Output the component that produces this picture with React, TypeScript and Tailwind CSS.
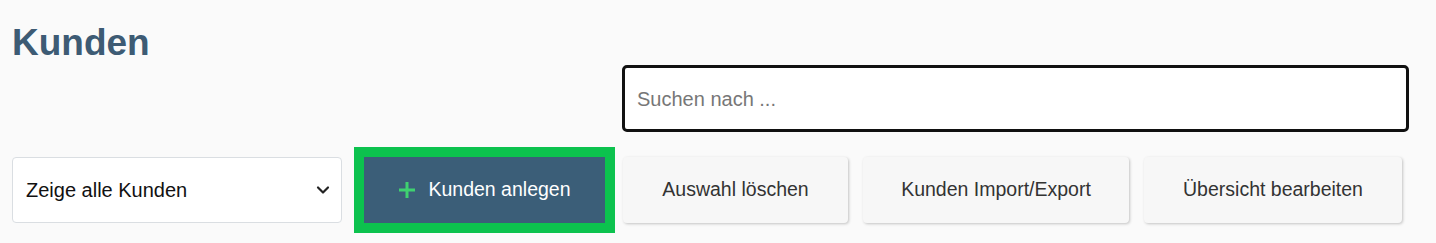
import { ChevronDown } from "lucide-react";

const font = { fontFamily: '"Liberation Sans", Arial, sans-serif' };

function GrayButton({ label, width }: { label: string; width: string }) {
  return (
    <button
      className={`${width} h-[66px] rounded-[4px] bg-[#f7f7f7] text-[19.5px] text-[#333] shadow-[1px_1px_3px_rgba(0,0,0,0.22)]`}
    >
      {label}
    </button>
  );
}

export default function App() {
  return (
    <div className="min-h-[243px] w-[1436px] bg-[#fafafa] px-[12px] pt-[24px]" style={font}>
      <h1 className="text-[37px] font-bold leading-none text-[#3d5b74]">Kunden</h1>

      <div className="mt-[4px] flex justify-end pr-[15px]">
        <div className="flex h-[67px] w-[787px] items-center rounded-[5px] border-[3px] border-[#111] bg-white px-[12px]">
          <input
            className="w-full bg-transparent text-[20px] text-[#333] outline-none placeholder:text-[#777]"
            placeholder="Suchen nach ..."
          />
        </div>
      </div>

      <div className="mt-[25px] flex items-center">
        <div className="flex h-[66px] w-[330px] items-center justify-between rounded-[4px] border border-[#dadee2] bg-white pl-[13px] pr-[8px]">
          <span className="text-[20px] text-[#111]">Zeige alle Kunden</span>
          <ChevronDown className="h-[20px] w-[20px] text-[#222]" strokeWidth={2.6} />
        </div>

        <button className="ml-[22px] flex h-[66px] w-[241px] items-center justify-center gap-[12px] bg-[#3b5e78] text-[19.5px] text-white outline-[10px] outline-solid outline-[#0cc24e]">
          <svg width="18" height="18" viewBox="0 0 18 18" className="text-[#3fd170]">
            <path d="M9 1v16M1 9h16" stroke="currentColor" strokeWidth="3" />
          </svg>
          Kunden anlegen
        </button>

        <div className="ml-[18px] flex gap-[15px]">
          <GrayButton label="Auswahl löschen" width="w-[225px]" />
          <GrayButton label="Kunden Import/Export" width="w-[266px]" />
          <GrayButton label="Übersicht bearbeiten" width="w-[258px]" />
        </div>
      </div>
    </div>
  );
}
